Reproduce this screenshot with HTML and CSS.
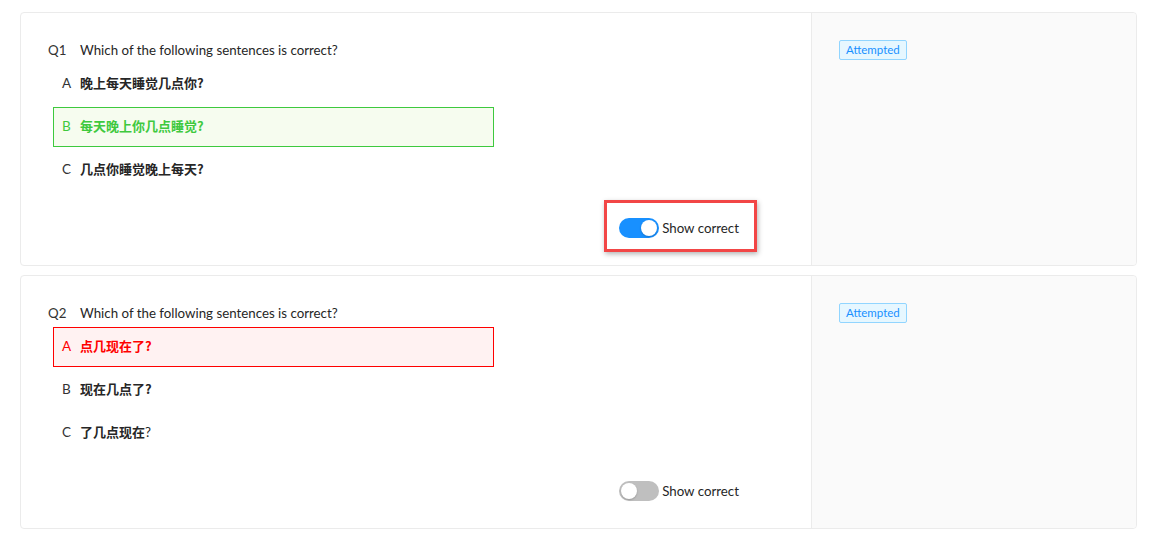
FILE: index.html
```html
<!DOCTYPE html>
<html lang="en">
<head>
<meta charset="utf-8">
<title>Quiz review</title>
<link rel="stylesheet" href="styles.css">
</head>
<body>
<div class="list">
  <div class="card">
    <div class="main">
      <div class="question"><span class="qno">Q1</span><span class="qtext">Which of the following sentences is correct?</span></div>
      <div class="options">
        <div class="option"><span class="letter">A</span><span class="otext">晚上每天睡觉几点你?</span></div>
        <div class="option correct"><span class="letter">B</span><span class="otext">每天晚上你几点睡觉?</span></div>
        <div class="option"><span class="letter">C</span><span class="otext">几点你睡觉晚上每天?</span></div>
      </div>
      <div class="footer">
        <label class="switch-wrap">
          <span class="switch on"><span class="knob"></span></span>
          <span class="switch-label">Show correct</span>
          <span class="highlight"></span>
        </label>
      </div>
    </div>
    <div class="side"><span class="tag">Attempted</span></div>
  </div>
  <div class="card">
    <div class="main">
      <div class="question"><span class="qno">Q2</span><span class="qtext">Which of the following sentences is correct?</span></div>
      <div class="options">
        <div class="option wrong"><span class="letter">A</span><span class="otext">点几现在了?</span></div>
        <div class="option"><span class="letter">B</span><span class="otext">现在几点了?</span></div>
        <div class="option"><span class="letter">C</span><span class="otext">了几点现在<span class="plain">?</span></span></div>
      </div>
      <div class="footer">
        <label class="switch-wrap">
          <span class="switch"><span class="knob"></span></span>
          <span class="switch-label">Show correct</span>
        </label>
      </div>
    </div>
    <div class="side"><span class="tag">Attempted</span></div>
  </div>
</div>
</body>
</html>
```
FILE: styles.css
```css
* { box-sizing: border-box; }
html, body { margin: 0; padding: 0; background: #fff; }
body {
  font-family: "Lato", "Noto Sans CJK SC", sans-serif;
  color: #262626;
  font-size: 13.3px;
}
.list {
  padding: 12px 15px 0 20px;
  display: flex;
  flex-direction: column;
  gap: 9px;
}
.card {
  display: flex;
  height: 254px;
  border: 1px solid #ebebeb;
  border-radius: 4px;
}
.main {
  width: 790px;
  padding: 26px 72px 0 27px;
  display: flex;
  flex-direction: column;
}
.side {
  flex: 1;
  background: #fafafa;
  border-left: 1px solid #ebebeb;
  border-radius: 0 4px 4px 0;
  padding: 27px 0 0 27px;
}
.question {
  display: flex;
  line-height: 22px;
  height: 22px;
}
.qno { width: 32px; color: #333; }
.qtext { color: #262626; }
.options {
  display: flex;
  flex-direction: column;
  gap: 3px;
  margin-top: 3px;
  padding-left: 5px;
}
.option {
  width: 441px;
  height: 40px;
  border: 1px solid transparent;
  display: flex;
  align-items: baseline;
  padding: 9px 0 0 8px;
  line-height: 18px;
}
.letter { width: 18px; color: #333; font-size: 13.5px; }
.otext {
  font-family: "Noto Sans CJK SC", sans-serif;
  font-weight: 700;
  font-size: 13px;
  color: #262626;
}
.plain { font-family: "Lato", sans-serif; font-weight: 400; font-size: 13.3px; }
.option.correct {
  border-color: #3ec93e;
  background: #f6fcef;
}
.option.correct .letter, .option.correct .otext { color: #3ec93e; }
.option.wrong {
  border-color: #ff0000;
  background: #fff2f2;
}
.option.wrong .letter, .option.wrong .otext { color: #ff0000; }
.footer {
  margin-top: 28px;
  display: flex;
  justify-content: flex-end;
}
.switch-wrap {
  position: relative;
  display: inline-flex;
  align-items: center;
  height: 20px;
  gap: 3px;
}
.switch {
  width: 40px;
  height: 20px;
  border-radius: 10px;
  background: #bfbfbf;
  position: relative;
  display: inline-block;
}
.switch .knob {
  position: absolute;
  top: 2px;
  left: 2px;
  width: 16px;
  height: 16px;
  border-radius: 50%;
  background: #fff;
  box-shadow: 0 1px 2px rgba(0,0,0,0.2);
}
.switch.on { background: #1890ff; }
.switch.on .knob { left: 22px; }
.switch-label { color: #262626; line-height: 20px; }
.highlight {
  position: absolute;
  left: -15px;
  right: -18px;
  top: -18px;
  bottom: -14px;
  border: 3px solid #f24646;
  box-shadow: 1px 2px 5px rgba(0,0,0,0.3);
  pointer-events: none;
}
.tag {
  display: inline-block;
  height: 20px;
  line-height: 18px;
  padding: 0 6px;
  font-size: 11.5px;
  color: #1890ff;
  background: #e6f7ff;
  border: 1px solid #91d5ff;
  border-radius: 2px;
}
```
